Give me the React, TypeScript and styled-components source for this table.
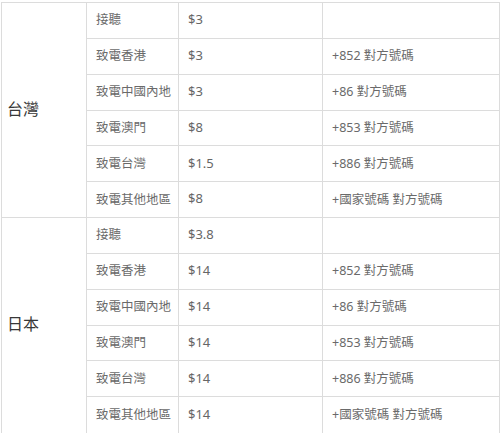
import React from "react";
import styled, { createGlobalStyle } from "styled-components";

const Global = createGlobalStyle`
  html, body { margin: 0; padding: 0; background: #fff; }
  body { font-family: "Noto Sans", "Noto Sans CJK TC", sans-serif; }
`;

const Page = styled.div`
  padding: 2px 0 0 1px;
  width: 500px;
  height: 433px;
  overflow: hidden;
  box-sizing: border-box;
`;

const Table = styled.table`
  border-collapse: collapse;
  table-layout: fixed;
  width: 498px;
`;

const RegionCol = styled.col`
  width: 84.5px;
`;
const LabelCol = styled.col`
  width: 92px;
`;
const PriceCol = styled.col`
  width: 144px;
`;
const DialCol = styled.col`
  width: 177.5px;
`;

const Row = styled.tr`
  height: 35.85px;
`;

const Cell = styled.td<{ $last?: boolean }>`
  border: 1px solid #dcdcdc;
  border-bottom: ${(p) => (p.$last ? "none" : "1px solid #dcdcdc")};
  padding: 0 0 1px 9.5px;
  font-family: "Noto Sans", "Noto Sans CJK TC", sans-serif;
  font-size: 12.5px;
  color: #6a6a6a;
  vertical-align: middle;
  white-space: nowrap;
  line-height: 1.2;
`;

const Price = styled(Cell)`
  font-size: 13px;
  color: #666;
`;

const Region = styled.td<{ $last?: boolean }>`
  border: 1px solid #dcdcdc;
  border-bottom: ${(p) => (p.$last ? "none" : "1px solid #dcdcdc")};
  padding: 0 0 4px 5px;
  font-family: "Noto Sans CJK TC", sans-serif;
  font-size: 16px;
  color: #383838;
  vertical-align: middle;
  white-space: nowrap;
`;

type Item = { label: string; price: string; dial: string };
type Group = { region: string; items: Item[] };

const groups: Group[] = [
  {
    region: "台灣",
    items: [
      { label: "接聽", price: "$3", dial: "" },
      { label: "致電香港", price: "$3", dial: "+852 對方號碼" },
      { label: "致電中國內地", price: "$3", dial: "+86 對方號碼" },
      { label: "致電澳門", price: "$8", dial: "+853 對方號碼" },
      { label: "致電台灣", price: "$1.5", dial: "+886 對方號碼" },
      { label: "致電其他地區", price: "$8", dial: "+國家號碼 對方號碼" },
    ],
  },
  {
    region: "日本",
    items: [
      { label: "接聽", price: "$3.8", dial: "" },
      { label: "致電香港", price: "$14", dial: "+852 對方號碼" },
      { label: "致電中國內地", price: "$14", dial: "+86 對方號碼" },
      { label: "致電澳門", price: "$14", dial: "+853 對方號碼" },
      { label: "致電台灣", price: "$14", dial: "+886 對方號碼" },
      { label: "致電其他地區", price: "$14", dial: "+國家號碼 對方號碼" },
    ],
  },
];

export default function App() {
  return (
    <>
      <Global />
      <Page>
        <Table>
          <colgroup>
            <RegionCol />
            <LabelCol />
            <PriceCol />
            <DialCol />
          </colgroup>
          <tbody>
            {groups.map((g, gi) =>
              g.items.map((it, i) => {
                const lastGroup = gi === groups.length - 1;
                const last = lastGroup && i === g.items.length - 1;
                return (
                  <Row key={`${gi}-${i}`}>
                    {i === 0 && (
                      <Region rowSpan={g.items.length} $last={lastGroup}>
                        {g.region}
                      </Region>
                    )}
                    <Cell $last={last}>{it.label}</Cell>
                    <Price $last={last}>{it.price}</Price>
                    <Cell $last={last}>{it.dial}</Cell>
                  </Row>
                );
              })
            )}
          </tbody>
        </Table>
      </Page>
    </>
  );
}
